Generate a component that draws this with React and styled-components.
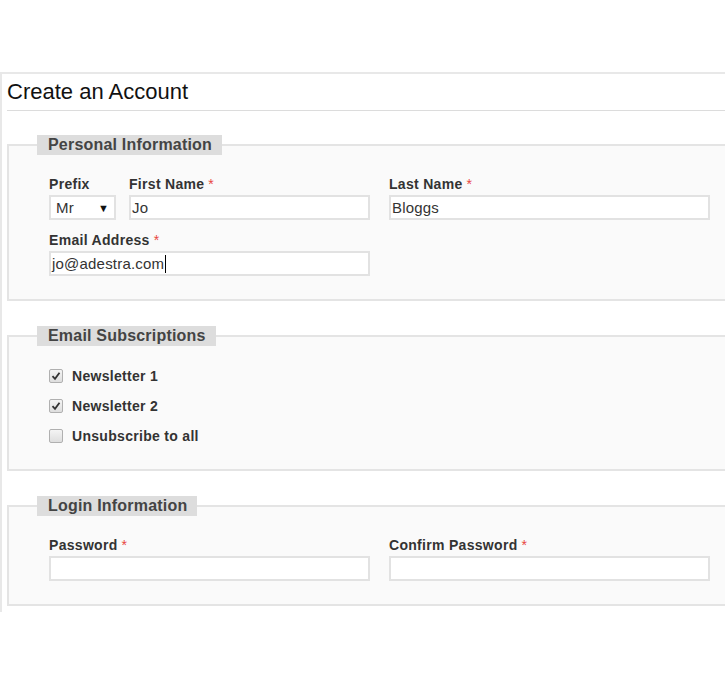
import React from 'react';
import styled, { createGlobalStyle } from 'styled-components';

const GlobalStyle = createGlobalStyle`
  body {
    margin: 0;
    background: #fff;
    font-family: 'Liberation Sans', Arial, sans-serif;
    overflow: hidden;
  }
`;

const Page = styled.div`
  width: 790px;
  margin-top: 72px;
  border-top: 2px solid #e8e8e8;
  border-left: 2px solid #e8e8e8;
  padding: 0 0 6px 5px;
`;

const Title = styled.h1`
  margin: 0;
  padding: 5px 0 6px 0;
  font-size: 22px;
  line-height: 25px;
  font-weight: normal;
  color: #111;
  border-bottom: 1px solid #dcdcdc;
`;

const Fieldset = styled.fieldset`
  margin: ${p => p.$first ? '24px' : '25px'} 0 0 0;
  padding: 0;
  border: 2px solid #e4e4e4;
  background: #fafafa;
  min-width: 0;
`;

const Legend = styled.legend`
  margin-left: 28px;
  padding: 0 10px 0 11px;
  background: #dddddd;
  color: #444;
  font-size: 16px;
  font-weight: bold;
  line-height: 20px;
  letter-spacing: 0.2px;
`;

const Body = styled.div`
  padding: ${p => p.$top}px 0 ${p => p.$bottom}px 40px;
  display: flex;
  flex-direction: column;
  gap: ${p => p.$gap || 0}px;
`;

const Row = styled.div`
  display: flex;
  gap: 19px;
`;

const Field = styled.div`
  display: flex;
  flex-direction: column;
  width: ${p => p.$w}px;
`;

const Label = styled.label`
  font-size: 14px;
  font-weight: bold;
  line-height: 16px;
  letter-spacing: 0.3px;
  color: #333;
  margin-bottom: 3px;
  white-space: nowrap;
`;

const Req = styled.span`
  color: #e8463f;
  font-weight: normal;
  margin-left: 4px;
`;

const Box = styled.div`
  box-sizing: border-box;
  height: 25px;
  width: 100%;
  border: 2px solid #e2e2e2;
  background: #fff;
  padding: 0 ${p => p.$pad || 1}px;
  display: flex;
  align-items: center;
  justify-content: ${p => p.$split ? 'space-between' : 'flex-start'};
  font-size: 15px;
  letter-spacing: 0.2px;
  color: #333;
`;

const Caret = styled.span`
  display: inline-block;
  width: 1px;
  height: 18px;
  background: #000;
  margin-left: 1px;
`;

const Arrow = styled.span`
  font-size: 11px;
  color: #111;
  margin-right: 0;
`;

const Pair = styled.div`
  display: flex;
  gap: 13px;
`;

const Check = styled.div`
  height: 30px;
  display: flex;
  align-items: center;
  gap: 9px;
  font-size: 14px;
  font-weight: bold;
  letter-spacing: 0.3px;
  color: #333;
`;

const CheckBox = styled.span`
  box-sizing: border-box;
  width: 14px;
  height: 14px;
  border: 1px solid #b0b0b0;
  border-radius: 2px;
  background: linear-gradient(#f4f4f4, #dedede);
  display: flex;
  align-items: center;
  justify-content: center;
`;

const Tick = () => (
  <svg width="10" height="10" viewBox="0 0 10 10">
    <path d="M1.5 5.2 L4 7.8 L8.5 1.8" fill="none" stroke="#333" strokeWidth="1.8" />
  </svg>
);

const Option = ({ checked, children }) => (
  <Check>
    <CheckBox>{checked && <Tick />}</CheckBox>
    {children}
  </Check>
);

export default function App() {
  return (
    <>
      <GlobalStyle />
      <Page>
        <Title>Create an Account</Title>

        <Fieldset $first>
          <Legend>Personal Information</Legend>
          <Body $top={21} $bottom={23} $gap={12}>
            <Row>
              <Pair>
                <Field $w={67}>
                  <Label>Prefix</Label>
                  <Box $split $pad={5}>
                    <span>Mr</span>
                    <Arrow>▼</Arrow>
                  </Box>
                </Field>
                <Field $w={241}>
                  <Label>First Name<Req>*</Req></Label>
                  <Box>Jo</Box>
                </Field>
              </Pair>
              <Field $w={321}>
                <Label>Last Name<Req>*</Req></Label>
                <Box>Bloggs</Box>
              </Field>
            </Row>
            <Row>
              <Field $w={321}>
                <Label>Email Address<Req>*</Req></Label>
                <Box>
                  jo@adestra.com<Caret />
                </Box>
              </Field>
            </Row>
          </Body>
        </Fieldset>

        <Fieldset>
          <Legend>Email Subscriptions</Legend>
          <Body $top={15} $bottom={18}>
            <Option checked>Newsletter 1</Option>
            <Option checked>Newsletter 2</Option>
            <Option>Unsubscribe to all</Option>
          </Body>
        </Fieldset>

        <Fieldset>
          <Legend>Login Information</Legend>
          <Body $top={21} $bottom={23}>
            <Row>
              <Field $w={321}>
                <Label>Password<Req>*</Req></Label>
                <Box />
              </Field>
              <Field $w={321}>
                <Label>Confirm Password<Req>*</Req></Label>
                <Box />
              </Field>
            </Row>
          </Body>
        </Fieldset>
      </Page>
    </>
  );
}
